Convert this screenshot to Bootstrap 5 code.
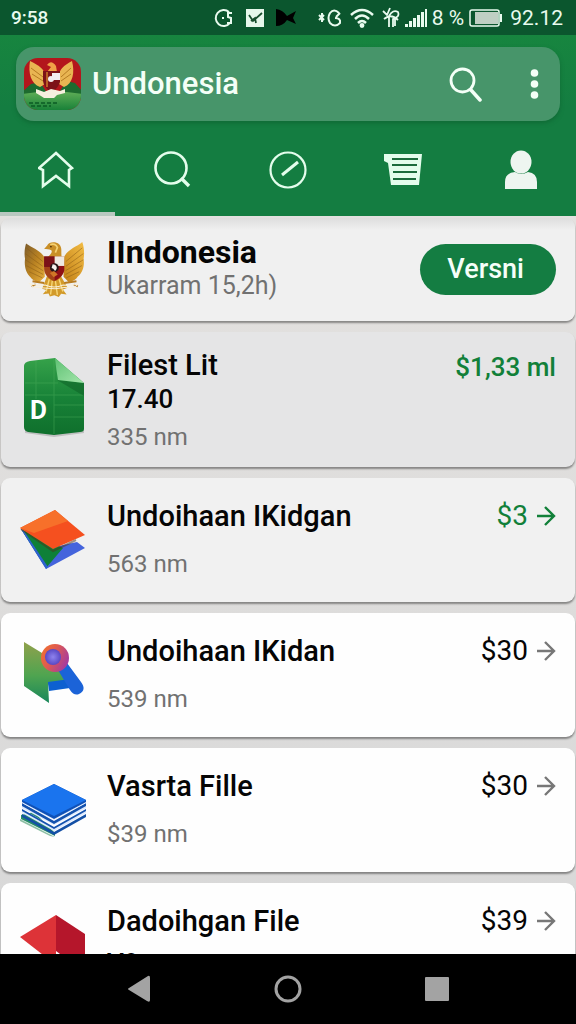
<!DOCTYPE html>
<html lang="id">
<head>
<meta charset="utf-8">
<meta name="viewport" content="width=device-width, initial-scale=1">
<title>Undonesia</title>
<link href="https://cdn.jsdelivr.net/npm/bootstrap@5.3.0/dist/css/bootstrap.min.css" rel="stylesheet">
<style>
  body { font-family: Roboto, "Liberation Sans", sans-serif; background: #dcdbda; color: #050505; }
  svg { display: block; flex: none; }
  .status-bar { height: 35px; background: #0b562e; color: #e9fbef; font-size: 21px; line-height: 34px; padding: 0 13px 0 11px; }
  .status-time { font-size: 19px; font-weight: 500; }
  .app-header { background: linear-gradient(#17853f, #147d41 40%); }
  .search-panel { margin: 12px 16px 0; padding: 8px 21px 8px 7px; background: #47956a; border-radius: 18px; box-shadow: 0 2px 4px #0b5a2c88; }
  .brand-text { font-size: 31px; line-height: 36px; font-weight: 500; color: #f4fff7; margin-left: 10px; }
  .bare-btn { background: none; border: 0; padding: 0; color: #f4fff7; }
  .tab-strip { height: 95px; }
  .tab-link { flex: 1 1 0; display: flex; justify-content: center; align-items: center; color: #e4fdec; padding-top: 6px; border-bottom: 4px solid transparent; }
  .tab-link.current { border-color: #b9c8c0; }
  .app-list { min-height: 0; gap: 11px; padding: 2px 1px 0; background: linear-gradient(#e3e1df, #d8d8d8); }
  .app-row { flex: none; display: flex; align-items: center; gap: 19px; padding: 0 19px; border-radius: 9px; background: #fefefe; box-shadow: 0 2px 2px #00000066; }
  .row-text { align-self: flex-start; flex: 1 1 auto; padding: 21px 0 23px; }
  .row-text.tight { padding: 16px 0 15px; }
  .row-text.lead-row { padding: 17px 0 20px; }
  .row-title, .row-version { font-size: 29px; line-height: 34px; font-weight: 500; margin: 0; }
  .row-version { font-size: 26px; }
  .row-title.strong { font-size: 32px; font-weight: 700; }
  .row-meta { font-size: 24px; line-height: 30px; color: #717171; margin: 16px 0 0; }
  .row-meta.near { margin-top: 6px; }
  .row-meta.close-by { margin-top: 2px; font-size: 25px; }
  .row-price { align-self: flex-start; display: flex; align-items: center; gap: 8px; margin-top: 21px; font-size: 28px; line-height: 34px; color: #050505; text-decoration: none; }
  .row-price.on-sale { color: #128039; }
  .row-price.raised { margin-top: 18px; font-size: 26px; font-weight: 500; }
  .row-price svg { color: #777; }
  .row-price.on-sale svg { color: #128039; }
  .bg-first { background: linear-gradient(#dedede, #f0f0f0 12px); }
  .bg-second { background: #e5e5e6; }
  .bg-third { background: #f1f1f1; }
  .version-btn { background: #147d42; color: #f6fff9; border: 0; border-radius: 26px; font-size: 27px; line-height: 33px; font-weight: 500; padding: 9px 32px 9px 27px; }
  .system-bar { height: 70px; background: #000; color: #a3a3a3; padding: 0 66px; }
</style>
</head>
<body class="vh-100 d-flex flex-column overflow-hidden">

<svg width="0" height="0" class="position-absolute" aria-hidden="true">
  <defs>
    <linearGradient id="goldL" x1="0" y1="0" x2="1" y2="1"><stop offset="0" stop-color="#7b5b2c"/><stop offset=".5" stop-color="#b98222"/><stop offset="1" stop-color="#e6ae3c"/></linearGradient>
    <linearGradient id="goldR" x1="1" y1="0" x2="0" y2="1"><stop offset="0" stop-color="#f3bd45"/><stop offset="1" stop-color="#c17f16"/></linearGradient>
    <linearGradient id="sheet" x1="0" y1="0" x2="0" y2="1"><stop offset="0" stop-color="#36a24a"/><stop offset=".5" stop-color="#188338"/><stop offset="1" stop-color="#0f6f2c"/></linearGradient>
    <linearGradient id="fold" x1="0" y1="0" x2="1" y2="1"><stop offset="0" stop-color="#5fc173"/><stop offset="1" stop-color="#a4e6ac"/></linearGradient>
    <linearGradient id="mapg" x1="0" y1="0" x2="0" y2="1"><stop offset="0" stop-color="#90a14c"/><stop offset=".55" stop-color="#4fa450"/><stop offset="1" stop-color="#18875a"/></linearGradient>
    <linearGradient id="ring" x1="0" y1="0" x2="1" y2=".5"><stop offset="0" stop-color="#f4742a"/><stop offset=".5" stop-color="#df5a50"/><stop offset="1" stop-color="#a83c9c"/></linearGradient>
    <radialGradient id="lens"><stop offset="0" stop-color="#8f83ee"/><stop offset="1" stop-color="#5848c4"/></radialGradient>
    <linearGradient id="grass" x1="0" y1="0" x2="0" y2="1"><stop offset="0" stop-color="#5fae57"/><stop offset="1" stop-color="#0d7a33"/></linearGradient>
    <symbol id="garuda" viewBox="70 75 185 170">
      <path d="M79 85C98 99 118 103 132 124L134 183L118 198C104 196 96 190 92 184C78 172 73 150 76 130C73 114 75 98 79 85Z" fill="url(#goldL)"/>
      <path d="M244 81C228 95 202 102 191 124L189 183L204 198C218 196 226 190 231 182C246 170 251 150 248 130C251 112 249 95 244 81Z" fill="url(#goldR)"/>
      <path d="M80 98L128 138M77 115L128 152M77 133L129 165M80 150L129 176M88 168L127 186M244 98L196 138M247 115L196 152M247 133L195 165M243 150L195 176M235 168L197 186" stroke="#8a5c16" stroke-width="2.500" opacity=".6"/>
      <path d="M132 101L141 91C146 80 165 78 176 87C187 98 180 110 184 126H142C152 116 157 110 153 105C146 101 140 101 132 101Z" fill="#c98f27"/>
      <path d="M150 89C158 84 168 88 171 97L165 112" fill="none" stroke="#f4d173" stroke-width="5"/><circle cx="152" cy="94" r="2.500" fill="#4b2d08"/>
      <path d="M140 182L126 218L139 222L128 234L145 232L149 241L162 237L175 242L182 233L198 235L187 220L201 215L182 182Z" fill="#d29a2a"/>
      <path d="M147 190L138 226M156 194L151 235M165 194L171 236M176 190L187 226" stroke="#f7d778" stroke-width="4"/>
      <path d="M98 196L132 201M191 201L227 196M107 205L95 211M219 206L231 211" stroke="#b77c21" stroke-width="6"/>
      <path d="M132 123H191V160C190 178 177 190 162 196C146 190 133 178 132 160Z" fill="#a44318"/>
      <path d="M132 123H163V154H132Z" fill="#7b1018"/><path d="M163 123H191V151H163Z" fill="#eee8e2"/>
      <path d="M163 151H191V164C188 178 177 188 163 194Z" fill="#8e0f16"/>
      <circle cx="162" cy="156" r="13" fill="#251416"/><path d="M157 146C169 147 174 157 164 166L159 159L154 157Z" fill="#f5edea"/><path d="M149 172L161 166L172 176L160 184Z" fill="#d07727"/>
      <path d="M90 203Q118 210 135 207Q161 219 188 207Q211 210 233 203L222 213Q190 214 164 218Q132 217 100 213Z" fill="none" stroke="#f8efda" stroke-width="3"/>
    </symbol>
    <symbol id="arrow" viewBox="0 0 20 22"><path d="M1 11H18M9 2L18 11L9 20" fill="none" stroke="currentColor" stroke-width="2.400"/></symbol>
  </defs>
</svg>

<div class="status-bar d-flex align-items-center flex-shrink-0">
  <span class="status-time me-auto">9:58</span>
  <svg width="20" height="20" viewBox="0 0 20 20" fill="none" stroke="currentColor" stroke-width="2"><path d="M15 4A8 8 0 1 0 16 15M18 5H14V9L17 10V15H13M8 10H10"/></svg>
  <svg class="ms-2" width="26" height="20" viewBox="0 0 26 20"><path d="M4 1H22V19H4Z" fill="#e6f7eb"/><path d="M7 7L11 13L20 5M9 13L13 10L14 15" fill="none" stroke="#174d2c" stroke-width="1.800"/></svg>
  <svg class="ms-2" width="22" height="20" viewBox="0 0 22 20"><path d="M0 1Q7 2 11 8L20 3L17 10L20 16L11 12Q7 18 0 18Z"/></svg>
  <svg style="margin-left:20px" width="24" height="20" viewBox="0 0 24 20" fill="none" stroke="currentColor" stroke-width="2"><path d="M1 7L6 12M6 7L1 12M4 5V14M21 5Q16 0 12 5Q9 10 12 15Q17 20 22 15Q23 10 17 10M18 9L22 5"/></svg>
  <svg class="ms-2" width="24" height="20" viewBox="0 0 24 20" fill="none" stroke="currentColor" stroke-width="2.500"><path d="M1 7Q12-3 23 7M5 11Q12 4 19 11M8 15Q12 11 16 15"/><circle cx="12" cy="17.500" r="1.200" fill="currentColor"/></svg>
  <svg class="ms-2" width="18" height="22" viewBox="0 0 18 22" fill="none" stroke="currentColor" stroke-width="1.800"><path d="M1 4L5 8L8 1M7 20V9Q11 2 16 5Q18 10 11 12V20M2 12Q9 6 16 13M13 12V19"/></svg>
  <svg style="margin-left:5px" width="22" height="18" viewBox="0 0 22 18" fill="currentColor"><path d="M0 15H3V18H0ZM4 12H7V18H4ZM8 9H11V18H8ZM12 6H15V18H12ZM16 3H19V18H16ZM20 0H22V18H20Z"/></svg>
  <span style="margin-left:5px">8 %</span>
  <svg style="margin-left:5px" width="34" height="18" viewBox="0 0 34 18"><rect x="1" y="1" width="29" height="16" rx="2" fill="none" stroke="currentColor" stroke-width="1.500"/><path d="M6 3H29V15H6Z" fill="#bfcfc3"/><path d="M31 5H33V13H31Z" fill="currentColor"/></svg>
  <span style="margin-left:7px">92.12</span>
</div>

<header class="app-header flex-shrink-0 d-flex flex-column">
  <div class="search-panel d-flex align-items-center">
    <svg width="59" height="58" viewBox="0 0 59 58" role="img" aria-label="Garuda">
      <clipPath id="tile"><rect x="1" y="3" width="57" height="52" rx="14"/></clipPath>
      <g clip-path="url(#tile)">
        <path d="M0 0H59V58H0Z" fill="#b3161c"/>
        <path d="M0 36L8 29L17 27L24 38H36L43 26L52 28L59 36V44H0Z" fill="#1d6b2f"/>
        <path d="M0 39Q29 34 59 39V58H0Z" fill="url(#grass)"/>
        <path d="M6 48H34M8 51H28" stroke="#0b5b25" stroke-width="1.500" stroke-dasharray="4 2"/>
        <path d="M7 6C17 11 21 14 22 20V29L17 32C8 29 5 18 7 6ZM49 6C40 11 37 14 36 20V29L41 32C50 29 52 17 49 6Z" fill="#e9b552"/>
        <path d="M8 13L20 22M9 19L20 26M48 13L38 22M48 19L38 26" stroke="#b47b22"/>
        <path d="M24 10Q28 4 33 11L34 17H24L28 12Z" fill="#f0a247"/>
        <path d="M20 16H37V27Q35 34 28 37Q21 33 20 26Z" fill="#7d1218"/><path d="M29 18H37V25H29Z" fill="#f2edf0"/><circle cx="28" cy="24" r="3" fill="#f2edf0"/><path d="M24 17V32" stroke="#cf7a2a" stroke-width="1.500"/>
        <path d="M13 34L21 37L28 34L37 36L42 34L42 38L34 40L31 43H21L18 41L13 38Z" fill="#f6efdf"/>
      </g>
    </svg>
    <span class="brand-text me-auto">Undonesia</span>
    <button class="bare-btn" type="button" aria-label="Cari"><svg width="33" height="35" viewBox="0 0 33 35" fill="none" stroke="currentColor"><circle cx="13.500" cy="13.500" r="11.500" stroke-width="2.800"/><path d="M22 23L31 33" stroke-width="3.500" stroke-linecap="round"/></svg></button>
    <button class="bare-btn ms-5" type="button" aria-label="Menu"><svg width="9" height="30" viewBox="0 0 9 30" fill="currentColor"><circle cx="4.500" cy="4" r="3.800"/><circle cx="4.500" cy="15" r="3.800"/><circle cx="4.500" cy="26" r="3.800"/></svg></button>
  </div>
  <nav class="tab-strip d-flex" aria-label="Bagian">
    <a class="tab-link current" href="#" aria-label="Beranda"><svg width="40" height="40" viewBox="2 0 40 40" fill="none" stroke="currentColor" stroke-width="2.600"><path d="M20 3L36 18L33 20V36L20 26L7 36V20L3 18Z"/></svg></a>
    <a class="tab-link" href="#" aria-label="Telusuri"><svg width="40" height="40" viewBox="0 0 40 40" fill="none" stroke="currentColor" stroke-width="2.600"><circle cx="18" cy="18" r="15.500"/><path d="M28 28L36 36" stroke-width="3.400"/></svg></a>
    <a class="tab-link" href="#" aria-label="Jelajah"><svg width="40" height="40" viewBox="0 0 40 40" fill="none" stroke="currentColor" stroke-width="2.200"><circle cx="20" cy="20" r="17.500"/><path d="M14 25L30 12" stroke-width="3"/></svg></a>
    <a class="tab-link" href="#" aria-label="Daftar"><svg width="40" height="40" viewBox="0 0 40 40"><path d="M1 4H39L36 35H8L5 13L1 11Z" fill="currentColor"/><path d="M9 9H35M9 15H34M10 22H34M10 29H33" stroke="#1c6b3c" stroke-width="1.800"/></svg></a>
    <a class="tab-link" href="#" aria-label="Profil"><svg width="40" height="40" viewBox="-3 0 40 40" fill="#eef5f0"><ellipse cx="20" cy="12" rx="10.500" ry="11.500"/><path d="M4 39V32Q4 23 14 22Q20 26 27 22Q36 23 36 32V39Z"/></svg></a>
  </nav>
</header>

<main class="app-list d-flex flex-column flex-grow-1 overflow-hidden">
  <article class="app-row bg-first">
    <svg width="68" height="84" viewBox="0 0 68 84" aria-hidden="true"><use href="#garuda" x="3" y="12" width="63" height="58"/></svg>
    <div class="row-text lead-row"><h2 class="row-title strong">IIndonesia</h2><p class="row-meta close-by">Ukarram 15,2h)</p></div>
    <button class="version-btn" type="button">Versni</button>
  </article>

  <article class="app-row bg-second">
    <svg width="68" height="84" viewBox="0 0 68 84" aria-hidden="true">
      <path d="M5 72L34 76L64 72V75L34 79L5 75Z" fill="#777" opacity=".35"/>
      <path d="M10 3L35 0L64 25V71Q64 74 60 74L34 77L8 74Q4 73 4 69V8Q4 4 10 3Z" fill="url(#sheet)"/>
      <path d="M5 25H38M5 37H64M34 47H64M34 59H64M16 3V41M34 1V76" stroke="#4cae5d" opacity=".45"/>
      <path d="M37 22L64 25V38Z" fill="#0c6127" opacity=".55"/>
      <path d="M35 0L64 25L38 22Q36 10 35 0Z" fill="url(#fold)"/>
      <text x="10" y="61" font-family="Roboto, sans-serif" font-size="26" font-weight="700" fill="#fff">D</text>
    </svg>
    <div class="row-text tight"><h2 class="row-title">Filest Lit</h2><p class="row-version">17.40</p><p class="row-meta near">335 nm</p></div>
    <a class="row-price on-sale raised" href="#">$1,33 ml</a>
  </article>

  <article class="app-row bg-third">
    <svg width="68" height="84" viewBox="0 0 68 84" aria-hidden="true">
      <path d="M1 31L26 71L65 50L57 44L30 50Z" fill="#4464dc"/>
      <path d="M1 31L26 70L43 50Z" fill="#0e8038"/><path d="M1 31L26 71L28 69L4 33Z" fill="#2e62cf"/>
      <path d="M1 31L33 53L56 42" fill="none" stroke="#4a3417" stroke-width="2" opacity=".5"/>
      <path d="M0 30L35 12L65 37L33 51Z" fill="#f5501f"/><path d="M0 30L35 12L48 23L14 35Z" fill="#f7702a"/>
    </svg>
    <div class="row-text"><h2 class="row-title">Undoihaan IKidgan</h2><p class="row-meta">563 nm</p></div>
    <a class="row-price on-sale" href="#">$3 <svg width="20" height="22"><use href="#arrow"/></svg></a>
  </article>

  <article class="app-row">
    <svg width="68" height="84" viewBox="0 0 68 84" aria-hidden="true">
      <path d="M27 44L50 43V55L29 58Z" fill="#0d60d0"/>
      <path d="M4 9L22 20L50 46L28 49L29 70L4 53Z" fill="url(#mapg)"/>
      <path d="M38 37L47 30L61 49Q67 57 59 61Q54 63 50 57Z" fill="#1b63d8"/>
      <circle cx="35" cy="25" r="14" fill="url(#ring)"/><circle cx="33" cy="24" r="8" fill="url(#lens)"/>
    </svg>
    <div class="row-text"><h2 class="row-title">Undoihaan IKidan</h2><p class="row-meta">539 nm</p></div>
    <a class="row-price" href="#">$30 <svg width="20" height="22"><use href="#arrow"/></svg></a>
  </article>

  <article class="app-row">
    <svg width="68" height="84" viewBox="0 0 68 84" aria-hidden="true">
      <path d="M0 51L35 69L30 68L0 53Z" fill="#8cbfa4"/><path d="M1 47L14 44L35 65V68L1 51Z" fill="#278c67"/>
      <path d="M2 46L34 64L66 46V49L34 67L2 49Z" fill="#1450a6"/>
      <path d="M2 41L34 59L66 41V45L34 63L2 45Z" fill="#dce9ff"/><path d="M2 41L34 59L66 41V43L34 61L2 43Z" fill="#1452ae"/>
      <path d="M2 35L34 53L66 35V40L34 57L2 40Z" fill="#dce9ff"/><path d="M2 35L34 53L66 35V38L34 56L2 38Z" fill="#1452ae"/>
      <path d="M2 32L34 49L66 32V35L34 52L2 35Z" fill="#e4edff"/>
      <path d="M2 32L34 16L66 32V34L34 51L2 34Z" fill="#0e51b8"/><path d="M2 32L34 16L66 32L34 48Z" fill="#1a74ee"/>
    </svg>
    <div class="row-text"><h2 class="row-title">Vasrta Fille</h2><p class="row-meta">$39 nm</p></div>
    <a class="row-price" href="#">$30 <svg width="20" height="22"><use href="#arrow"/></svg></a>
  </article>

  <article class="app-row">
    <svg width="68" height="84" viewBox="0 0 68 84" aria-hidden="true">
      <path d="M0 36L36 14V64Z" fill="#dd3338"/><path d="M36 14L65 33V62L36 72Z" fill="#b5162b"/><path d="M36 50L48 59L36 70Z" fill="#fff"/>
    </svg>
    <div class="row-text"><h2 class="row-title">Dadoihgan File</h2><p class="row-version mt-2">V8 nm</p></div>
    <a class="row-price" href="#">$39 <svg width="20" height="22"><use href="#arrow"/></svg></a>
  </article>
</main>

<nav class="system-bar d-flex flex-shrink-0" aria-label="Sistem">
  <button class="bare-btn flex-fill d-flex justify-content-center align-items-center" type="button" aria-label="Kembali"><svg width="24" height="28" viewBox="0 0 24 28" fill="#a3a3a3"><path d="M21 1Q23 0 23 3V25Q23 28 20 26L2 15Q0 14 2 13Z"/></svg></button>
  <button class="bare-btn flex-fill d-flex justify-content-center align-items-center" type="button" aria-label="Layar utama"><svg width="28" height="28" viewBox="0 0 28 28" fill="none" stroke="#a3a3a3" stroke-width="3"><circle cx="14" cy="14" r="12"/></svg></button>
  <button class="bare-btn flex-fill d-flex justify-content-center align-items-center" type="button" aria-label="Aplikasi terbaru"><svg width="24" height="26" viewBox="0 0 24 26" fill="#a3a3a3"><rect y="1" width="24" height="24" rx="1"/></svg></button>
</nav>

<script src="https://cdn.jsdelivr.net/npm/bootstrap@5.3.0/dist/js/bootstrap.bundle.min.js"></script>
</body>
</html>
